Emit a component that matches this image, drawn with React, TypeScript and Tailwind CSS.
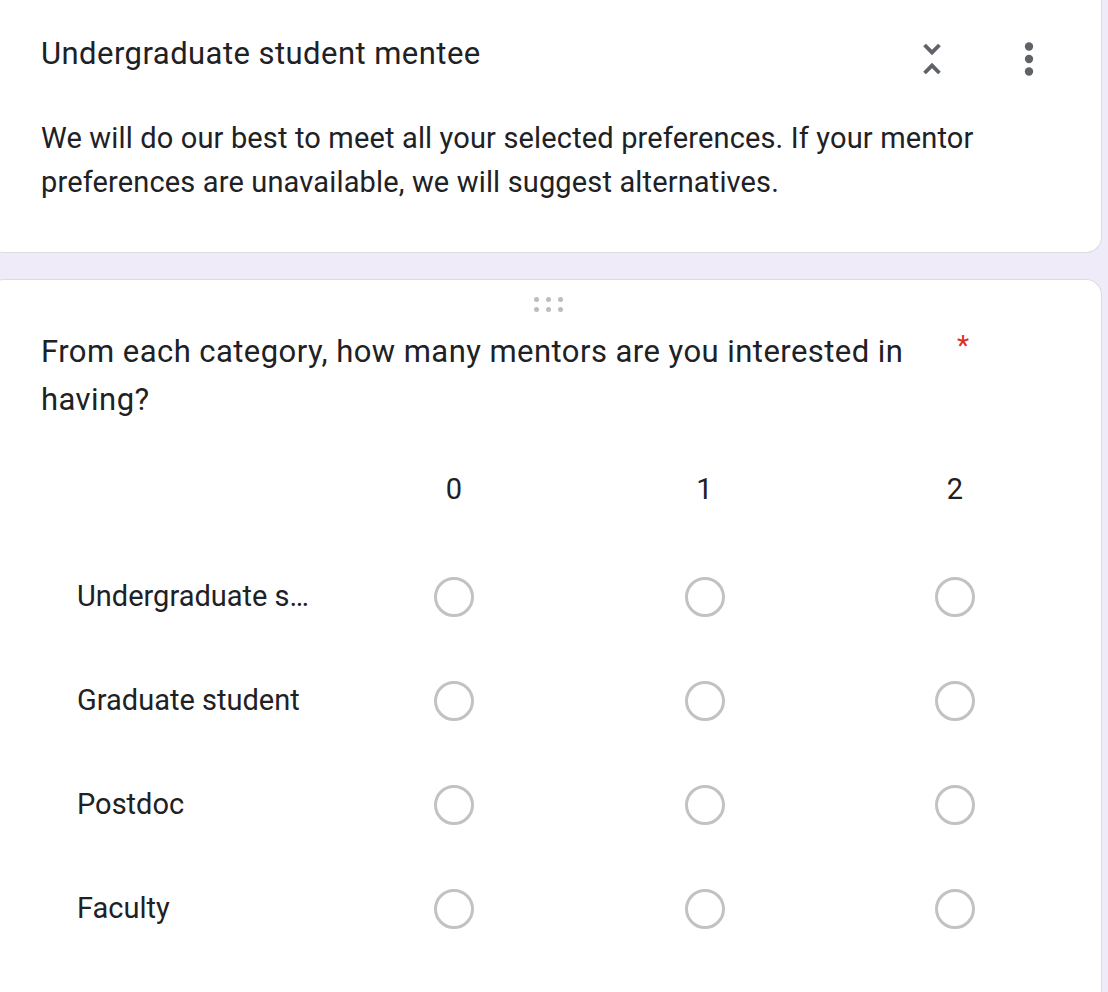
import React from "react";

const ROWS = ["Undergraduate student", "Graduate student", "Postdoc", "Faculty"];
const COLS = ["0", "1", "2"];

function UnfoldLessIcon() {
  return (
    <svg width="46" height="46" viewBox="0 0 24 24" fill="#5f6368">
      <path d="M7.41 18.59L8.83 20 12 16.83 15.17 20l1.41-1.41L12 14l-4.59 4.59zm9.18-13.18L15.17 4 12 7.17 8.83 4 7.41 5.41 12 10l4.59-4.59z" />
    </svg>
  );
}

function MoreVertIcon() {
  return (
    <svg width="50" height="50" viewBox="0 0 24 24" fill="#5f6368">
      <circle cx="12" cy="6" r="2" />
      <circle cx="12" cy="12" r="2" />
      <circle cx="12" cy="18" r="2" />
    </svg>
  );
}

function DragHandle() {
  return (
    <div className="grid grid-cols-3 gap-x-[7px] gap-y-[5px]">
      {Array.from({ length: 6 }).map((_, i) => (
        <span key={i} className="size-[5px] rounded-full bg-[#bdbdbd]" />
      ))}
    </div>
  );
}

function Radio() {
  return <span className="block size-10 rounded-full border-[3px] border-[#c2c2c2]" />;
}

export default function App() {
  return (
    <div
      className="min-h-[992px] w-[1108px] overflow-hidden bg-[#f0ebf8] text-[#202124]"
      style={{ fontFamily: "Roboto, 'Liberation Sans', sans-serif" }}
    >
      <div className="ml-[-12px] w-[1114px] rounded-b-[16px] border border-t-0 border-[#dadce0] bg-white pb-[48px] pl-[52px] pr-[40px]">
        <div className="flex items-start pt-[31px]">
          <h2 className="flex-1 text-[31px] leading-[46px] tracking-[0.45px]">
            Undergraduate student mentee
          </h2>
          <div className="mr-[49px] mt-[5px] flex h-[46px] w-[46px] items-center justify-center">
            <UnfoldLessIcon />
          </div>
          <div className="mr-[7px] mt-[3px] flex h-[50px] w-[50px] items-center justify-center">
            <MoreVertIcon />
          </div>
        </div>
        <p className="mt-[32px] w-[1000px] text-[29px] leading-[44px] tracking-[0.15px]">
          We will do our best to meet all your selected preferences. If your mentor preferences are
          unavailable, we will suggest alternatives.
        </p>
      </div>

      <div className="ml-[-12px] mt-[26px] w-[1114px] rounded-t-[16px] border border-b-0 border-[#dadce0] bg-white pb-[60px] pl-[52px]">
        <div className="flex justify-center pr-[46px] pt-[17px]">
          <DragHandle />
        </div>
        <div className="mt-[16px] flex">
          <p className="w-[880px] text-[31px] leading-[48px] tracking-[0.45px]">
            From each category, how many mentors are you interested in having?
          </p>
          <span className="ml-[36px] mt-[-6px] text-[28px] leading-[48px] text-[#d93025]">*</span>
        </div>

        <div className="mt-[42px] grid grid-cols-[288px_250px_251px_250px]">
          <div className="h-[48px]" />
          {COLS.map((c) => (
            <div key={c} className="flex h-[48px] items-center justify-center text-[29px]">
              {c}
            </div>
          ))}
          <div className="col-span-4 h-[31px]" />
          {ROWS.map((r) => (
            <React.Fragment key={r}>
              <div className="flex h-[104px] items-center pl-[36px] pr-[16px]">
                <span className="truncate text-[29px]">{r}</span>
              </div>
              {COLS.map((c) => (
                <div key={c} className="flex h-[104px] items-center justify-center">
                  <Radio />
                </div>
              ))}
            </React.Fragment>
          ))}
        </div>
      </div>
    </div>
  );
}
